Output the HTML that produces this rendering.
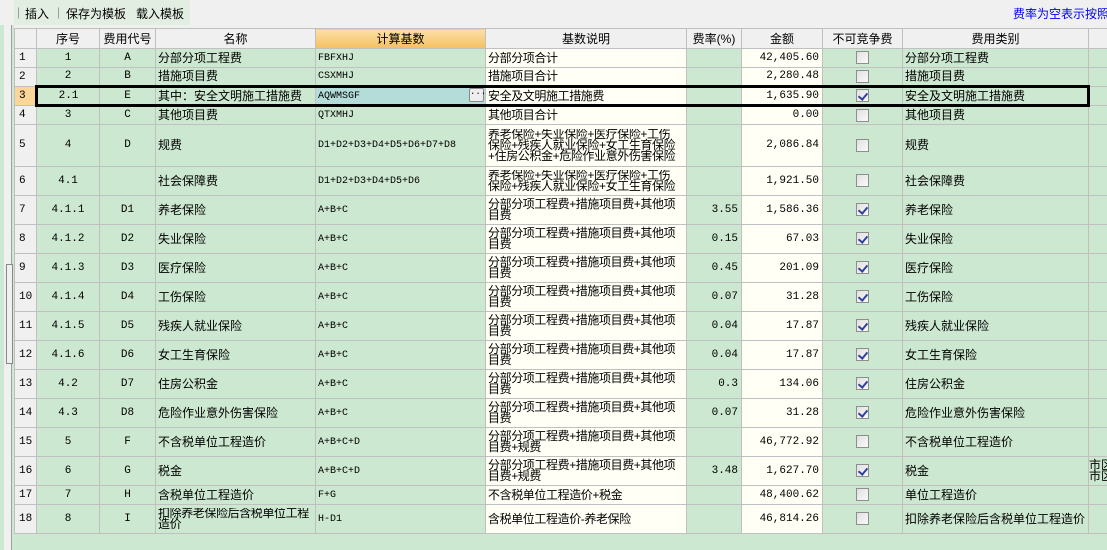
<!DOCTYPE html>
<html><head><meta charset="utf-8"><style>
*{margin:0;padding:0;box-sizing:border-box}
body{width:1107px;height:550px;overflow:hidden;background:#f0f0f0;position:relative;font-family:"Liberation Sans","Noto Sans CJK SC",sans-serif;font-size:12px;color:#000}
#tb{position:absolute;left:14px;top:0;width:176px;height:25px;background:#e3eee3}
#tb span{position:absolute;top:5px;font-size:12px}
#left{position:absolute;left:0;top:25px;width:14px;height:525px;background:#cde8d0}
#left .p{position:absolute;left:0;top:0;width:12px;height:525px;background:#f0f0f0;border-right:1px solid #a0a0a0}
#left .g{position:absolute;left:0;top:0;width:4px;height:525px;background:#cde8d0}
#area{position:absolute;left:14px;top:29px;width:1093px;height:521px;background:#cde8d0}
#wrap{position:absolute;left:14px;top:28px;width:1093px;height:522px;overflow:hidden}
table{position:absolute;left:0;top:0;width:1104px;border-collapse:collapse;table-layout:fixed}
td{border:1px solid #c0c0c0;padding:0 2px;background:#cde8d0;overflow:hidden;white-space:nowrap;line-height:11px;vertical-align:middle}
td>div.x{overflow:hidden}
td.n{background:#f0f0f0;text-align:left;padding-left:4px;font-family:"Liberation Mono",monospace;font-size:11px}
td.c{text-align:center;font-family:"Liberation Mono",monospace;font-size:11px}
td.m{font-family:"Liberation Mono",monospace;font-size:10px}
td.w{background:#fffff6;white-space:normal;word-break:break-all;letter-spacing:-0.4px}
td.r{text-align:right;font-family:"Liberation Mono",monospace;font-size:11px;padding-right:3px}
td.wr{background:#fffff6}
tr.h td{background:#f0f0f0;text-align:center;line-height:16px}
td.o{background:linear-gradient(#fbe0a8,#f4c060) !important}
.cb{display:inline-block;width:13px;height:13px;border:1px solid #8e8e8e;background:linear-gradient(135deg,#e0e0e0,#fafafa);vertical-align:middle;position:relative}
.cb.k::after{content:"";position:absolute;left:3px;top:1px;width:4px;height:7px;border:solid #3040a0;border-width:0 2px 2px 0;transform:rotate(40deg)}
.t{border-top:3px solid #000 !important;border-bottom:3px solid #000 !important}
</style></head><body>
<div id="tb"><span style="left:3px;color:#999">|</span><span style="left:11px">插入</span><span style="left:43px;color:#999">|</span><span style="left:52px">保存为模板</span><span style="left:122px">载入模板</span></div>
<div style="position:absolute;left:1013px;top:5px;color:#0000ff;white-space:nowrap">费率为空表示按照</div>
<div id="left"><div class="p"></div><div class="g"></div><div style="position:absolute;left:6px;top:239px;width:7px;height:100px;border:1px solid #888;background:#f0f0f0"></div></div>
<div id="area"></div>
<div id="wrap">
<table>
<colgroup><col style="width:22px"><col style="width:63px"><col style="width:56px"><col style="width:160px"><col style="width:170px"><col style="width:201px"><col style="width:55px"><col style="width:81px"><col style="width:80px"><col style="width:186px"><col style="width:30px"></colgroup>
<tr class="h" style="height:20px"><td></td><td>序号</td><td>费用代号</td><td>名称</td><td class="o">计算基数</td><td>基数说明</td><td>费率(%)</td><td>金额</td><td>不可竞争费</td><td>费用类别</td><td></td></tr>
<tr style="height:19px"><td class="n">1</td><td class="c">1</td><td class="c">A</td><td>分部分项工程费</td><td class="m">FBFXHJ</td><td class="w">分部分项合计</td><td></td><td class="r wr">42,405.60</td><td class="c"><span class="cb"></span></td><td>分部分项工程费</td><td></td></tr>
<tr style="height:19px"><td class="n">2</td><td class="c">2</td><td class="c">B</td><td>措施项目费</td><td class="m">CSXMHJ</td><td class="w">措施项目合计</td><td></td><td class="r wr">2,280.48</td><td class="c"><span class="cb"></span></td><td>措施项目费</td><td></td></tr>
<tr style="height:19px"><td class="n" style="background:#fcd698">3</td><td class="c t" style="border-left:3px solid #000">2.1</td><td class="c t">E</td><td class="t">其中：安全文明施工措施费</td><td class="m t" style="background:#b4dcd8;position:relative">AQWMSGF<span style="position:absolute;right:1px;top:0px;width:15px;height:14px;border:1px solid #888;border-radius:2px;background:#eee;font-size:9px;line-height:10px;text-align:center">···</span></td><td class="w t">安全及文明施工措施费</td><td class="t"></td><td class="r wr t">1,635.90</td><td class="c t"><span class="cb k"></span></td><td class="t" style="border-right:3px solid #000">安全及文明施工措施费</td><td></td></tr>
<tr style="height:19px"><td class="n">4</td><td class="c">3</td><td class="c">C</td><td>其他项目费</td><td class="m">QTXMHJ</td><td class="w">其他项目合计</td><td></td><td class="r wr">0.00</td><td class="c"><span class="cb"></span></td><td>其他项目费</td><td></td></tr>
<tr style="height:42px"><td class="n">5</td><td class="c">4</td><td class="c">D</td><td>规费</td><td class="m">D1+D2+D3+D4+D5+D6+D7+D8</td><td class="w"><div class="x" style="max-height:36px;white-space:nowrap">养老保险+失业保险+医疗保险+工伤<br>保险+残疾人就业保险+女工生育保险<br>+住房公积金+危险作业意外伤害保险</div></td><td></td><td class="r wr">2,086.84</td><td class="c"><span class="cb"></span></td><td>规费</td><td></td></tr>
<tr style="height:29px"><td class="n">6</td><td class="c">4.1</td><td class="c"></td><td>社会保障费</td><td class="m">D1+D2+D3+D4+D5+D6</td><td class="w"><div class="x" style="max-height:24px;white-space:nowrap">养老保险+失业保险+医疗保险+工伤<br>保险+残疾人就业保险+女工生育保险</div></td><td></td><td class="r wr">1,921.50</td><td class="c"><span class="cb"></span></td><td>社会保障费</td><td></td></tr>
<tr style="height:29px"><td class="n">7</td><td class="c">4.1.1</td><td class="c">D1</td><td>养老保险</td><td class="m">A+B+C</td><td class="w">分部分项工程费+措施项目费+其他项目费</td><td class="r">3.55</td><td class="r wr">1,586.36</td><td class="c"><span class="cb k"></span></td><td>养老保险</td><td></td></tr>
<tr style="height:29px"><td class="n">8</td><td class="c">4.1.2</td><td class="c">D2</td><td>失业保险</td><td class="m">A+B+C</td><td class="w">分部分项工程费+措施项目费+其他项目费</td><td class="r">0.15</td><td class="r wr">67.03</td><td class="c"><span class="cb k"></span></td><td>失业保险</td><td></td></tr>
<tr style="height:29px"><td class="n">9</td><td class="c">4.1.3</td><td class="c">D3</td><td>医疗保险</td><td class="m">A+B+C</td><td class="w">分部分项工程费+措施项目费+其他项目费</td><td class="r">0.45</td><td class="r wr">201.09</td><td class="c"><span class="cb k"></span></td><td>医疗保险</td><td></td></tr>
<tr style="height:29px"><td class="n">10</td><td class="c">4.1.4</td><td class="c">D4</td><td>工伤保险</td><td class="m">A+B+C</td><td class="w">分部分项工程费+措施项目费+其他项目费</td><td class="r">0.07</td><td class="r wr">31.28</td><td class="c"><span class="cb k"></span></td><td>工伤保险</td><td></td></tr>
<tr style="height:29px"><td class="n">11</td><td class="c">4.1.5</td><td class="c">D5</td><td>残疾人就业保险</td><td class="m">A+B+C</td><td class="w">分部分项工程费+措施项目费+其他项目费</td><td class="r">0.04</td><td class="r wr">17.87</td><td class="c"><span class="cb k"></span></td><td>残疾人就业保险</td><td></td></tr>
<tr style="height:29px"><td class="n">12</td><td class="c">4.1.6</td><td class="c">D6</td><td>女工生育保险</td><td class="m">A+B+C</td><td class="w">分部分项工程费+措施项目费+其他项目费</td><td class="r">0.04</td><td class="r wr">17.87</td><td class="c"><span class="cb k"></span></td><td>女工生育保险</td><td></td></tr>
<tr style="height:29px"><td class="n">13</td><td class="c">4.2</td><td class="c">D7</td><td>住房公积金</td><td class="m">A+B+C</td><td class="w">分部分项工程费+措施项目费+其他项目费</td><td class="r">0.3</td><td class="r wr">134.06</td><td class="c"><span class="cb k"></span></td><td>住房公积金</td><td></td></tr>
<tr style="height:29px"><td class="n">14</td><td class="c">4.3</td><td class="c">D8</td><td>危险作业意外伤害保险</td><td class="m">A+B+C</td><td class="w">分部分项工程费+措施项目费+其他项目费</td><td class="r">0.07</td><td class="r wr">31.28</td><td class="c"><span class="cb k"></span></td><td>危险作业意外伤害保险</td><td></td></tr>
<tr style="height:29px"><td class="n">15</td><td class="c">5</td><td class="c">F</td><td>不含税单位工程造价</td><td class="m">A+B+C+D</td><td class="w">分部分项工程费+措施项目费+其他项目费+规费</td><td></td><td class="r wr">46,772.92</td><td class="c"><span class="cb"></span></td><td>不含税单位工程造价</td><td></td></tr>
<tr style="height:29px"><td class="n">16</td><td class="c">6</td><td class="c">G</td><td>税金</td><td class="m">A+B+C+D</td><td class="w">分部分项工程费+措施项目费+其他项目费+规费</td><td class="r">3.48</td><td class="r wr">1,627.70</td><td class="c"><span class="cb k"></span></td><td>税金</td><td style="white-space:normal;padding:0">市区<br>市区</td></tr>
<tr style="height:19px"><td class="n">17</td><td class="c">7</td><td class="c">H</td><td>含税单位工程造价</td><td class="m">F+G</td><td class="w">不含税单位工程造价+税金</td><td></td><td class="r wr">48,400.62</td><td class="c"><span class="cb"></span></td><td>单位工程造价</td><td></td></tr>
<tr style="height:29px"><td class="n">18</td><td class="c">8</td><td class="c">I</td><td style="white-space:normal;letter-spacing:-0.4px"><div class="x" style="max-height:24px">扣除养老保险后含税单位工程造价</div></td><td class="m">H-D1</td><td class="w">含税单位工程造价-养老保险</td><td></td><td class="r wr">46,814.26</td><td class="c"><span class="cb"></span></td><td>扣除养老保险后含税单位工程造价</td><td></td></tr>
</table>
</div>
</body></html>
